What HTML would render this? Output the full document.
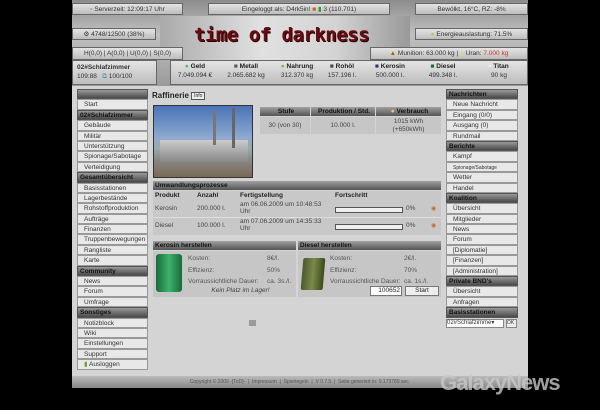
<!DOCTYPE html>
<html><head><meta charset="utf-8"><style>
*{margin:0;padding:0;box-sizing:border-box}
body{width:600px;height:410px;background:#000;font-family:"Liberation Sans",sans-serif;font-size:7px;color:#222;position:relative;overflow:hidden}
.a{position:absolute}
.hb{position:absolute;background:linear-gradient(#e4e4e4,#bdbdbd);border:1px solid #666;font-size:6.5px;color:#333;text-align:center;line-height:11px;white-space:nowrap}
.side div{height:10.4px;line-height:10px;border:1px solid #999;background:#e8e8e8;padding-left:6px;font-size:6.5px;color:#333;margin-bottom:0;white-space:nowrap;overflow:hidden}
.side div.h{color:#111;font-weight:bold;padding-left:2px;background:linear-gradient(#999,#4a4a4a);border-color:#555}
.bar{position:absolute;background:linear-gradient(#a0a0a0,#555);font-weight:bold;color:#111;font-size:6.5px;line-height:9px;padding-left:2px}
.cell{position:absolute;background:#c6c6c6;font-size:6.5px;line-height:9px;color:#444}
.res{position:absolute;top:62px;text-align:center;font-size:6.5px;color:#333;line-height:9px}
.res b{color:#222}
</style></head><body>
<div class="a" style="left:72px;top:0;width:456px;height:86px;background:linear-gradient(#8c8c8c,#c0c0c0 40%,#9a9a9a)"></div>
<div class="a" style="left:160px;top:16px;width:250px;height:44px;background:linear-gradient(90deg,#aaa,#e0e0e0 40%,#d4d4d4 70%,#999)"></div>
<div class="a" style="left:194px;top:24px;font-family:'DejaVu Sans Mono',monospace;font-weight:bold;font-size:19px;color:#6a0a12;letter-spacing:-0.5px;text-shadow:1px 1px 0 #200">time of darkness</div>
<div class="hb" style="left:72px;top:3px;width:111px;height:12px">◦ Serverzeit: 12:09:17 Uhr</div>
<div class="hb" style="left:208px;top:3px;width:182px;height:12px">Eingeloggt als: D4rk5in! <span style="color:#c60">■</span> <span style="color:#393">▮</span> 3 (110.701)</div>
<div class="hb" style="left:415px;top:3px;width:113px;height:12px">Bewölkt, 16°C, RZ: -8%</div>
<div class="hb" style="left:72px;top:28px;width:84px;height:12px">⚙ 4748/12500 (38%)</div>
<div class="hb" style="left:415px;top:28px;width:113px;height:12px"><span style="color:#cb6">●</span> Energieauslastung: 71.5%</div>
<div class="hb" style="left:72px;top:47px;width:111px;height:13px">H(0,0) | A(0,0) | U(0,0) | S(0,0)</div>
<div class="hb" style="left:370px;top:47px;width:158px;height:13px"><span style="color:#a60">▲</span> Munition: 63.000 kg | <span style="color:#dd6">●</span> Uran: <span style="color:#c33">7.000 kg</span></div>
<div class="hb" style="left:72px;top:60px;width:85px;height:25px;text-align:left;padding-left:4px;line-height:9px;padding-top:2px"><b>02#Schlafzimmer</b><br>109:88 &nbsp;&nbsp;<span style="color:#58a">⧉</span> 100/100</div>
<div class="hb" style="left:170px;top:60px;width:358px;height:25px"></div>
<div class="res" style="left:172px;width:46px"><b><span style="color:#6a6">●</span> Geld</b><br>7.049.094 €</div>
<div class="res" style="left:218px;width:56px"><b><span style="color:#555">■</span> Metall</b><br>2.065.682 kg</div>
<div class="res" style="left:274px;width:46px"><b><span style="color:#7b3">●</span> Nahrung</b><br>312.370 kg</div>
<div class="res" style="left:320px;width:44px"><b><span style="color:#444">■</span> Rohöl</b><br>157.196 l.</div>
<div class="res" style="left:368px;width:44px"><b><span style="color:#336">■</span> Kerosin</b><br>500.000 l.</div>
<div class="res" style="left:420px;width:46px"><b><span style="color:#263">■</span> Diesel</b><br>499.348 l.</div>
<div class="res" style="left:474px;width:50px"><b><span style="color:#fff">▪</span> Titan</b><br>90 kg</div>
<div class="a" style="left:72px;top:86px;width:456px;height:290px;background:#d4d4d4"></div>
<div class="a side" style="left:77px;top:89px;width:71px">
<div class="h"></div><div>Start</div><div class="h">02#Schlafzimmer</div><div>Gebäude</div><div>Militär</div><div>Unterstützung</div><div>Spionage/Sabotage</div><div>Verteidigung</div><div class="h">Gesamtübersicht</div><div>Basisstationen</div><div>Lagerbestände</div><div>Rohstoffproduktion</div><div>Aufträge</div><div>Finanzen</div><div>Truppenbewegungen</div><div>Rangliste</div><div>Karte</div><div class="h">Community</div><div>News</div><div>Forum</div><div>Umfrage</div><div class="h">Sonstiges</div><div>Notizblock</div><div>Wiki</div><div>Einstellungen</div><div>Support</div><div><span style="color:#6a3">▮</span> Ausloggen</div>
</div>
<div class="a side" style="left:446px;top:89px;width:72px">
<div class="h">Nachrichten</div><div>Neue Nachricht</div><div>Eingang (0/0)</div><div>Ausgang (0)</div><div>Rundmail</div><div class="h">Berichte</div><div>Kampf</div><div style="font-size:5px">Spionage/Sabotage</div><div>Wetter</div><div>Handel</div><div class="h">Koalition</div><div>Übersicht</div><div>Mitglieder</div><div>News</div><div>Forum</div><div>[Diplomatie]</div><div>[Finanzen]</div><div>[Administration]</div><div class="h">Private BND's</div><div>Übersicht</div><div>Anfragen</div><div class="h">Basisstationen</div>
<div style="padding:0;border:0;background:none;height:10px"><span style="display:inline-block;width:58px;height:9px;background:#fff;border:1px solid #888;font-size:6px;line-height:7px">02#Schlafzimme▾</span> <span style="display:inline-block;width:11px;height:9px;background:#eee;border:1px solid #888;font-size:5px;line-height:7px">OK</span></div>
</div>
<div class="a" style="left:152px;top:91px;font-size:8px;font-weight:bold;color:#222">Raffinerie <span style="font-size:5px;font-weight:normal;border:1px solid #555;background:#eee;padding:0 2px;vertical-align:middle">Info</span></div>
<div class="a" style="left:153px;top:105px;width:100px;height:73px;background:linear-gradient(#4a74b8,#8fa9d0 45%,#9aa 60%,#888 75%,#7a6a55);border:1px solid #333"></div>
<div class="a" style="left:160px;top:140px;width:88px;height:22px;background:linear-gradient(#ccc,#888)"></div>
<div class="a" style="left:213px;top:110px;width:3px;height:35px;background:#777"></div>
<div class="a" style="left:232px;top:108px;width:3px;height:40px;background:#666"></div>
<div class="bar" style="left:260px;top:107px;width:50px;height:9px;text-align:center">Stufe</div>
<div class="bar" style="left:311px;top:107px;width:64px;height:9px;text-align:center">Produktion / Std.</div>
<div class="bar" style="left:376px;top:107px;width:65px;height:9px;text-align:center"><span style="color:#dc8">●</span> Verbrauch</div>
<div class="cell" style="left:260px;top:117px;width:50px;height:17px;text-align:center;line-height:17px">30 (von 30)</div>
<div class="cell" style="left:311px;top:117px;width:64px;height:17px;text-align:center;line-height:17px">10.000 l.</div>
<div class="cell" style="left:376px;top:117px;width:65px;height:17px;text-align:center;line-height:8px;padding-top:1px">1015 kWh<br>(+650kWh)</div>
<div class="bar" style="left:153px;top:181px;width:288px;height:9px">Umwandlungsprozesse</div>
<div class="cell" style="left:153px;top:191px;width:288px;height:44px;background:#c8c8c8"></div>
<div class="a" style="left:155px;top:191px;font-weight:bold;font-size:6.5px;line-height:9px">Produkt</div>
<div class="a" style="left:197px;top:191px;font-weight:bold;font-size:6.5px;line-height:9px">Anzahl</div>
<div class="a" style="left:240px;top:191px;font-weight:bold;font-size:6.5px;line-height:9px">Fertigstellung</div>
<div class="a" style="left:335px;top:191px;font-weight:bold;font-size:6.5px;line-height:9px">Fortschritt</div>
<div class="a" style="left:155px;top:205px;color:#444;font-size:6.5px">Kerosin</div>
<div class="a" style="left:197px;top:205px;color:#444;font-size:6.5px">200.000 l.</div>
<div class="a" style="left:240px;top:201px;color:#444;font-size:6.5px;line-height:7px">am 06.06.2009 um 10:48:53<br>Uhr</div>
<div class="a" style="left:335px;top:207px;width:68px;height:6px;border:1px solid #555;background:#eee"></div>
<div class="a" style="left:406px;top:205px;color:#444;font-size:6.5px">0%</div>
<div class="a" style="left:431px;top:205px;color:#c63;font-size:6px">◉</div>
<div class="a" style="left:155px;top:222px;color:#444;font-size:6.5px">Diesel</div>
<div class="a" style="left:197px;top:222px;color:#444;font-size:6.5px">100.000 l.</div>
<div class="a" style="left:240px;top:218px;color:#444;font-size:6.5px;line-height:7px">am 07.06.2009 um 14:35:33<br>Uhr</div>
<div class="a" style="left:335px;top:224px;width:68px;height:6px;border:1px solid #555;background:#eee"></div>
<div class="a" style="left:406px;top:222px;color:#444;font-size:6.5px">0%</div>
<div class="a" style="left:431px;top:222px;color:#c63;font-size:6px">◉</div>
<div class="a" style="left:153px;top:217px;width:288px;height:1px;background:#ddd"></div>
<div class="bar" style="left:153px;top:241px;width:143px;height:9px">Kerosin herstellen</div>
<div class="bar" style="left:298px;top:241px;width:143px;height:9px">Diesel herstellen</div>
<div class="cell" style="left:153px;top:251px;width:143px;height:46px"></div>
<div class="cell" style="left:298px;top:251px;width:143px;height:46px"></div>
<div class="a" style="left:156px;top:254px;width:26px;height:38px;background:linear-gradient(90deg,#1a6a3a,#3cb36a,#1a6a3a);border-radius:3px"></div>
<div class="a" style="left:302px;top:258px;width:22px;height:32px;background:linear-gradient(90deg,#4a5a2a,#7a8a4a,#3a4a1a);border-radius:2px;transform:skewX(-5deg)"></div>
<div class="a" style="left:188px;top:253px;color:#555;font-size:6.5px;line-height:11.5px">Kosten:<br>Effizienz:<br>Vorraussichtliche Dauer:</div>
<div class="a" style="left:267px;top:253px;color:#555;font-size:6.5px;line-height:11.5px">8€/l.<br>50%<br>ca. 3s./l.</div>
<div class="a" style="left:188px;top:287px;width:105px;text-align:center;color:#444;font-style:italic;font-size:6.5px">Kein Platz im Lager!</div>
<div class="a" style="left:330px;top:253px;color:#555;font-size:6.5px;line-height:11.5px">Kosten:<br>Effizienz:<br>Vorraussichtliche Dauer:</div>
<div class="a" style="left:404px;top:253px;color:#555;font-size:6.5px;line-height:11.5px">2€/l.<br>70%<br>ca. 1s./l.</div>
<div class="a" style="left:370px;top:286px;width:32px;height:10px;background:#fff;border:1px solid #777;text-align:right;font-size:6.5px;line-height:8px;padding-right:1px">100652</div>
<div class="a" style="left:405px;top:286px;width:34px;height:10px;background:#eee;border:1px solid #777;text-align:center;font-size:6.5px;line-height:8px">Start</div>
<div class="a" style="left:249px;top:320px;width:7px;height:6px;background:#999"></div>
<div class="a" style="left:72px;top:376px;width:456px;height:12px;background:linear-gradient(#bbb,#888);text-align:center;font-size:5px;line-height:12px;color:#555">Copyright © 2009 -[ToD]- &nbsp;|&nbsp; Impressum &nbsp;|&nbsp; Spielregeln &nbsp;|&nbsp; V 0.7.5 &nbsp;|&nbsp; Seite generiert in: 0.173789 sec.</div>
<div class="a" style="left:440px;top:370px;font-size:22px;font-weight:bold;color:rgba(200,200,200,0.8);letter-spacing:-1px">GalaxyNews</div>
</body></html>
